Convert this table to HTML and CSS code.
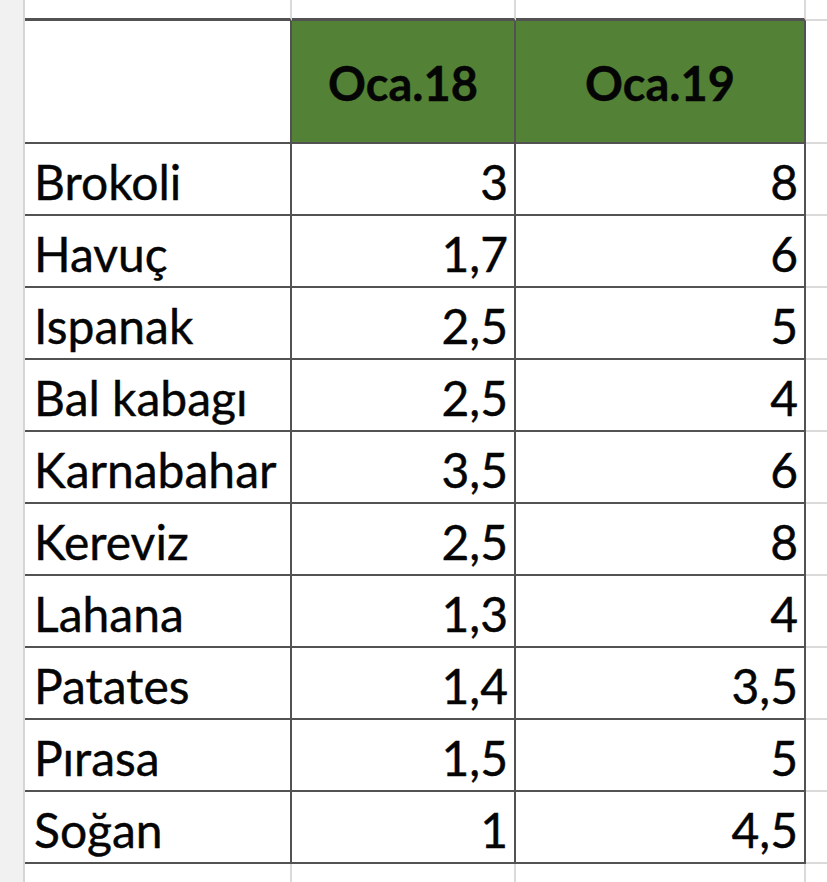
FILE: index.html
```html
<!DOCTYPE html>
<html lang="tr">
<head>
<meta charset="utf-8">
<title>Sebze fiyatları</title>
<link rel="stylesheet" href="styles.css">
</head>
<body>
<div class="page">
  <div class="gutter"></div>
  <div class="sheet">
    <div class="c top edge"></div>
    <div class="c top edge"></div>
    <div class="c top edge"></div>
    <div class="c top out"></div>

    <div class="c head blank"></div>
    <div class="c head green">Oca.18</div>
    <div class="c head green">Oca.19</div>
    <div class="c out"></div>

    <div class="c name">Brokoli</div><div class="c num">3</div><div class="c num">8</div><div class="c out"></div>
    <div class="c name">Havuç</div><div class="c num">1,7</div><div class="c num">6</div><div class="c out"></div>
    <div class="c name">Ispanak</div><div class="c num">2,5</div><div class="c num">5</div><div class="c out"></div>
    <div class="c name">Bal kabagı</div><div class="c num">2,5</div><div class="c num">4</div><div class="c out"></div>
    <div class="c name">Karnabahar</div><div class="c num">3,5</div><div class="c num">6</div><div class="c out"></div>
    <div class="c name">Kereviz</div><div class="c num">2,5</div><div class="c num">8</div><div class="c out"></div>
    <div class="c name">Lahana</div><div class="c num">1,3</div><div class="c num">4</div><div class="c out"></div>
    <div class="c name">Patates</div><div class="c num">1,4</div><div class="c num">3,5</div><div class="c out"></div>
    <div class="c name">Pırasa</div><div class="c num">1,5</div><div class="c num">5</div><div class="c out"></div>
    <div class="c name">Soğan</div><div class="c num">1</div><div class="c num">4,5</div><div class="c out"></div>

    <div class="c bottom"></div>
    <div class="c bottom"></div>
    <div class="c bottom"></div>
    <div class="c bottom last"></div>
  </div>
</div>
</body>
</html>
```

FILE: styles.css
```css
* { box-sizing: border-box; }

html, body {
  margin: 0;
  padding: 0;
  background: #ffffff;
}

body {
  font-family: Lato, "Noto Sans", sans-serif;
  color: #050505;
  width: 827px;
  height: 882px;
  overflow: hidden;
}

.page {
  display: flex;
  height: 882px;
}

.gutter {
  width: 25px;
  flex: 0 0 25px;
  background: #f1f1f1;
  border-right: 2px solid #d6d6d6;
}

.sheet {
  flex: 1;
  display: grid;
  grid-template-columns: 267px 224px 290px 1fr;
  grid-template-rows: 21px 123px repeat(10, 72px) 1fr;
}

.c {
  font-size: 48px;
  white-space: nowrap;
  overflow: hidden;
  -webkit-text-stroke: 0.4px #050505;
}

.top {
  border-right: 2px solid #dadada;
}
.top.edge {
  border-bottom: 3px solid #525252;
}
.top.out {
  border-right: none;
  border-bottom: 2px solid #dadada;
}

.head {
  border-right: 2px solid #525252;
  border-bottom: 2px solid #525252;
  display: flex;
  align-items: center;
  justify-content: center;
  padding-top: 3px;
  font-size: 47px;
  font-weight: 700;
}

.green {
  background: #538135;
}

.name,
.num {
  border-right: 2px solid #525252;
  border-bottom: 2px solid #525252;
  display: flex;
  align-items: center;
  padding-top: 5px;
}

.name {
  padding-left: 9px;
}

.num {
  justify-content: flex-end;
  padding-right: 6px;
}

.out {
  border-bottom: 2px solid #dadada;
}

.bottom {
  border-right: 2px solid #dadada;
}
.bottom.last {
  border-right: none;
}
```
